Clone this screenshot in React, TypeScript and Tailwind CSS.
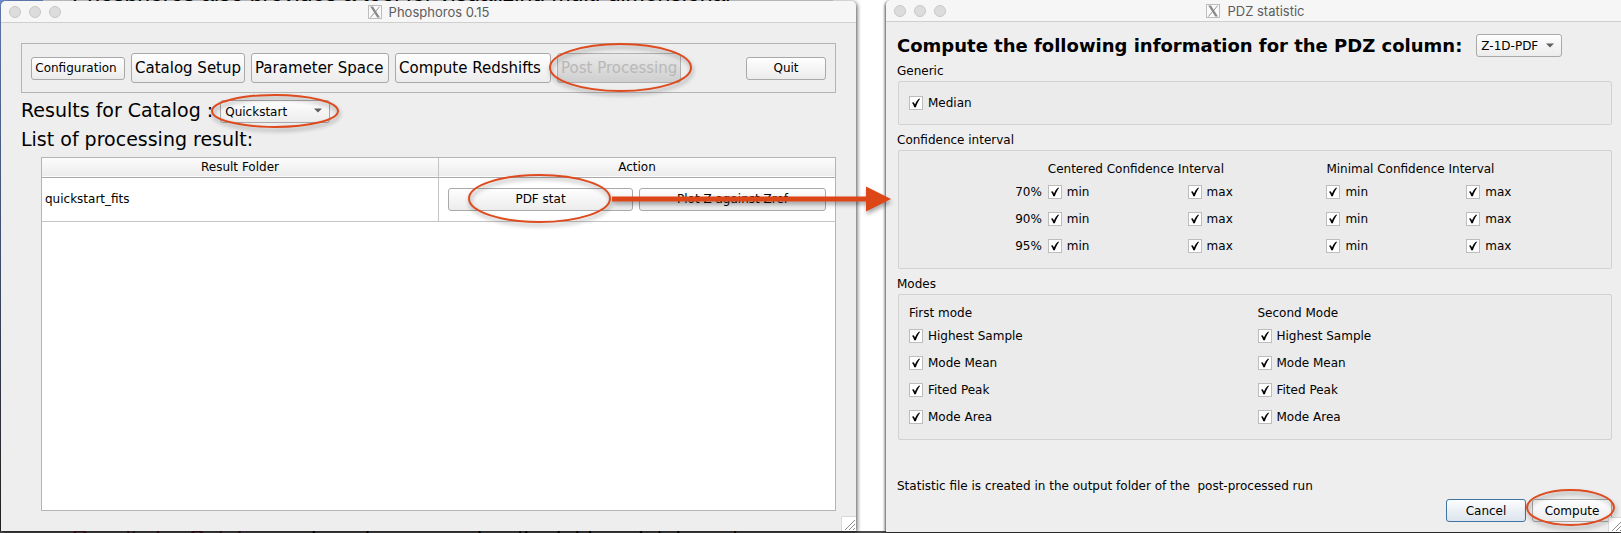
import React, { useId } from "react";

const WIDGET =
  "border border-[#a9a9a9] rounded-[3px] bg-linear-to-b from-[#fefefe] to-[#ececec] text-black";

function Ring({ className }: { className: string }) {
  return (
    <svg
      aria-hidden="true"
      className={`pointer-events-none absolute z-10 overflow-visible drop-shadow-[1px_3px_2px_rgba(0,0,0,0.35)] ${className}`}
    >
      <ellipse cx="50%" cy="50%" rx="50%" ry="50%" fill="none" stroke="#dd4b1e" strokeWidth="2" />
    </svg>
  );
}

function XLogo() {
  return (
    <svg aria-hidden="true" viewBox="0 0 14 14" className="size-[14px]">
      <rect x="0.5" y="0.5" width="13" height="13" fill="#fafafa" stroke="#bdbdbd" />
      <path d="M2.2 1.6h2.8l7 11H9.200z" fill="#8a8a8a" />
      <path d="M11.600 1.600L7.700 6.400M6.400 7.800L2.300 12.600" stroke="#8a8a8a" strokeWidth="0.900" fill="none" />
    </svg>
  );
}

function TitleBar({ title, className }: { title: string; className: string }) {
  return (
    <header className={`grid h-[22px] shrink-0 grid-cols-[1fr_auto_1fr] items-center border-b border-[#cfcfcf] bg-[#f6f6f6] px-2 ${className}`}>
      <div className="flex gap-2">
        {["Close", "Minimize", "Zoom"].map((name) => (
          <button key={name} type="button" aria-label={name} className="size-3 rounded-full border border-[#c8c8c8] bg-[#dcdcdc]" />
        ))}
      </div>
      <div className="flex items-center gap-[7px] pt-px">
        <XLogo />
        <h1 className="font-[Inter,sans-serif] text-[13px] leading-4 text-[#5c5c5c]">{title}</h1>
      </div>
    </header>
  );
}

function Grip({ className }: { className: string }) {
  return (
    <svg aria-hidden="true" viewBox="0 0 15 15" className={`absolute bottom-0 size-[15px] ${className}`}>
      <rect width="15" height="15" fill="#fff" />
      <path d="M0.500 15V0.500H15" fill="none" stroke="#d8d8d8" />
      <path d="M4 14L14 4M8 14L14 8M12 14L14 12" stroke="#8f8f8f" fill="none" />
    </svg>
  );
}

function Combo({ label, value, className }: { label: string; value: string; className: string }) {
  return (
    <div className={`relative h-[23px] ${className}`}>
      <select aria-label={label} defaultValue={value} className={`size-full appearance-none pl-1 text-xs ${WIDGET}`}>
        <option>{value}</option>
      </select>
      <svg aria-hidden="true" viewBox="0 0 8 5" className="pointer-events-none absolute top-[9px] right-2 h-[5px] w-2">
        <path d="M0 0.500h8L4 4.500z" fill="#5f5f5f" />
      </svg>
    </div>
  );
}

function Check({ label, name }: { label: string; name?: string }) {
  const id = useId();
  return (
    <div className="flex h-[14px] items-center gap-[5px]">
      <span className="relative size-[14px]">
        <input
          id={id}
          type="checkbox"
          defaultChecked
          aria-label={name}
          className="peer block size-[14px] appearance-none border border-[#bdbdbd] bg-white"
        />
        <svg aria-hidden="true" viewBox="0 0 14 14" className="pointer-events-none absolute inset-0 hidden size-[14px] peer-checked:block">
          <path d="M3 6.800L4.700 6.200L6 8.600C7 6 8.400 4 10.200 2.600L11 3.100C9.300 5.400 8 8 6.900 11.200L5.300 11.300C4.800 9.600 4 8 3 6.800z" fill="#000" />
        </svg>
      </span>
      <label htmlFor={id}>{label}</label>
    </div>
  );
}

function Group({ title, children, className }: { title: string; children: React.ReactNode; className: string }) {
  return (
    <section>
      <h3 className="leading-[14px]">{title}</h3>
      <div className={`mt-[3px] ml-px rounded-[2px] border border-[#d2d2d2] bg-[#ebebeb] pr-[5px] pl-[10px] ${className}`}>
        {children}
      </div>
    </section>
  );
}

const STEPS = [
  { label: "Catalog Setup", width: "w-[114px]" },
  { label: "Parameter Space", width: "w-[138px]" },
  { label: "Compute Redshifts", width: "w-[156px]" },
];
const MODES = ["Highest Sample", "Mode Mean", "Fited Peak", "Mode Area"];

function MainWindow() {
  return (
    <main className="relative mt-px mb-[2px] flex flex-col rounded-t-[5px] bg-[#eeeeee] shadow-[1px_1px_4px_rgba(0,0,0,0.7)]">
      <TitleBar title="Phosphoros 0.15" className="rounded-t-[5px]" />
      <div className="flex grow flex-col pt-5 pr-5 pb-5 pl-5">
        <nav className="flex h-[50px] items-center gap-[6px] border border-[#b4b4b4] px-[9px]">
          <button type="button" className={`h-[23px] w-[94px] pr-1 text-xs ${WIDGET}`}>
            Configuration
          </button>
          {STEPS.map((step) => (
            <button
              key={step.label}
              type="button"
              className={`h-[30px] pl-[3px] text-left text-[15px] whitespace-nowrap ${step.width} ${WIDGET}`}
            >
              {step.label}
            </button>
          ))}
          <div className="relative">
            <button
              type="button"
              disabled
              className="h-[30px] rounded-[3px] border border-[#b0b0b0] bg-linear-to-b from-[#e9e9e9] to-[#cfcfcf] px-[3px] text-[15px] text-[#b8b8b8]"
            >
              Post Processing
            </button>
            <Ring className="-top-[9px] -left-[7px] h-[47px] w-[141px]" />
          </div>
          <button type="button" className={`ml-auto h-[23px] w-20 text-xs ${WIDGET}`}>
            Quit
          </button>
        </nav>
        <div className="mt-[5px] flex h-6 items-center gap-[7px]">
          <span className="text-[19px] leading-6">Results for Catalog :</span>
          <div className="relative">
            <Combo label="Results for Catalog" value="Quickstart" className="w-[110px]" />
            <Ring className="-top-1 -left-2 h-8 w-[126px]" />
          </div>
        </div>
        <h2 className="mt-[5px] text-[19px] leading-6">List of processing result:</h2>
        <div className="mt-[6px] ml-5 grow border border-[#b4b4b4] bg-white">
          <table className="w-full table-fixed border-collapse text-xs">
            <thead>
              <tr className="h-[19px] border-b border-[#a9a9a9] bg-linear-to-b from-[#fcfcfc] to-[#ececec]">
                <th className="border-r border-[#c4c4c4] font-normal">Result Folder</th>
                <th className="font-normal">Action</th>
              </tr>
            </thead>
            <tbody>
              <tr className="h-11 border-b border-[#c4c4c4]">
                <td className="border-r border-[#c4c4c4] pl-[3px]">quickstart_fits</td>
                <td className="px-[9px]">
                  <div className="flex gap-[6px]">
                    <div className="relative flex-1">
                      <button type="button" className={`h-[23px] w-full ${WIDGET}`}>
                        PDF stat
                      </button>
                      <Ring className="-top-[13px] left-[21px] h-[47px] w-[141px]" />
                      <svg
                        aria-hidden="true"
                        viewBox="0 0 279 26"
                        className="pointer-events-none absolute -top-[2px] left-[164px] z-20 h-[26px] w-[279px] drop-shadow-[1px_3px_2px_rgba(0,0,0,0.35)]"
                      >
                        <path d="M0 10.500H254V0.500L279 13L254 25.500V15.500H0z" fill="#dd4718" />
                      </svg>
                    </div>
                    <button type="button" className={`h-[23px] flex-1 ${WIDGET}`}>
                      Plot Z against Zref
                    </button>
                  </div>
                </td>
              </tr>
            </tbody>
          </table>
        </div>
      </div>
      <Grip className="right-0" />
    </main>
  );
}

function StatisticDialog() {
  return (
    <section className="relative mb-px flex flex-col rounded-tl-[5px] bg-[#eeeeee] text-xs shadow-[-1px_1px_3px_rgba(0,0,0,0.7)]">
      <TitleBar title="PDZ statistic" className="-mr-1 rounded-tl-[5px]" />
      <div className="flex grow flex-col pt-3 pr-[9px] pb-[10px] pl-[11px]">
        <div className="flex items-center gap-[14px]">
          <h2 className="text-lg leading-[23px] font-bold">Compute the following information for the PDZ column:</h2>
          <Combo label="PDZ column" value="Z-1D-PDF" className="w-[86px]" />
        </div>
        <div className="mt-[7px] flex flex-col gap-2">
          <Group title="Generic" className="py-[14px]">
            <Check label="Median" />
          </Group>
          <Group title="Confidence interval" className="pt-[11px] pb-[15px]">
            <div className="grid grid-cols-[139fr_140fr_139fr_140fr_140fr] gap-y-[13px]">
              <span />
              <span className="col-span-2 -mb-1 leading-[14px]">Centered Confidence Interval</span>
              <span className="col-span-2 -mb-1 leading-[14px]">Minimal Confidence Interval</span>
              {["70%", "90%", "95%"].map((level) => (
                <React.Fragment key={level}>
                  <span className="pr-[6px] text-right leading-[14px]">{level}</span>
                  <Check label="min" name={`${level} centered min`} />
                  <Check label="max" name={`${level} centered max`} />
                  <Check label="min" name={`${level} minimal min`} />
                  <Check label="max" name={`${level} minimal max`} />
                </React.Fragment>
              ))}
            </div>
          </Group>
          <Group title="Modes" className="pt-[11px] pb-[15px]">
            <div className="grid grid-cols-2">
              {["First mode", "Second Mode"].map((mode) => (
                <div key={mode} className="flex flex-col gap-[13px]">
                  <h4 className="-mb-1 leading-[14px]">{mode}</h4>
                  {MODES.map((item) => (
                    <Check key={item} label={item} name={`${mode} ${item}`} />
                  ))}
                </div>
              ))}
            </div>
          </Group>
        </div>
        <p className="mt-auto leading-[14px] whitespace-pre">{"Statistic file is created in the output folder of the  post-processed run"}</p>
        <div className="mt-[6px] flex justify-end gap-[6px]">
          <button type="button" className="h-[23px] w-20 rounded-[3px] border border-[#3f75a3] bg-linear-to-b from-[#fcfdfe] to-[#dce4ee]">
            Cancel
          </button>
          <div className="relative">
            <button type="button" className={`h-[23px] w-20 ${WIDGET}`}>
              Compute
            </button>
            <Ring className="-top-[9px] -left-[5px] h-[35px] w-[87px]" />
          </div>
        </div>
      </div>
      <Grip className="-right-[2px]" />
    </section>
  );
}

function PageBehind() {
  return (
    <div aria-hidden="true" className="absolute inset-0 -z-10 flex flex-col justify-between font-['Liberation_Sans',sans-serif] text-[23px] leading-4 whitespace-nowrap">
      <div className="absolute inset-y-0 left-0 -z-10 w-[43px] bg-linear-to-b from-[#6f8fd0] via-[#4a5a80] to-[#2a2420]" />
      <div className="ml-[43px] flex h-px w-[790px] items-end overflow-hidden bg-[#dedede] pl-[29px]">
        Phosphoros also provides a tool for visualizing multi-dimensional
      </div>
      <div className="flex h-[2px] items-start gap-9 overflow-hidden bg-[#4a4a4a] pl-[72px]">
        <span className="text-[#3a0d1c]">Results for Catalog</span>
        <span>drop-down menu) or the folders database to</span>
      </div>
    </div>
  );
}

export default function App() {
  return (
    <div className="relative isolate grid min-h-screen grid-cols-[855fr_735fr] gap-[30px] overflow-hidden bg-white pl-px font-['DejaVu_Sans',sans-serif] text-black">
      <PageBehind />
      <MainWindow />
      <StatisticDialog />
    </div>
  );
}
